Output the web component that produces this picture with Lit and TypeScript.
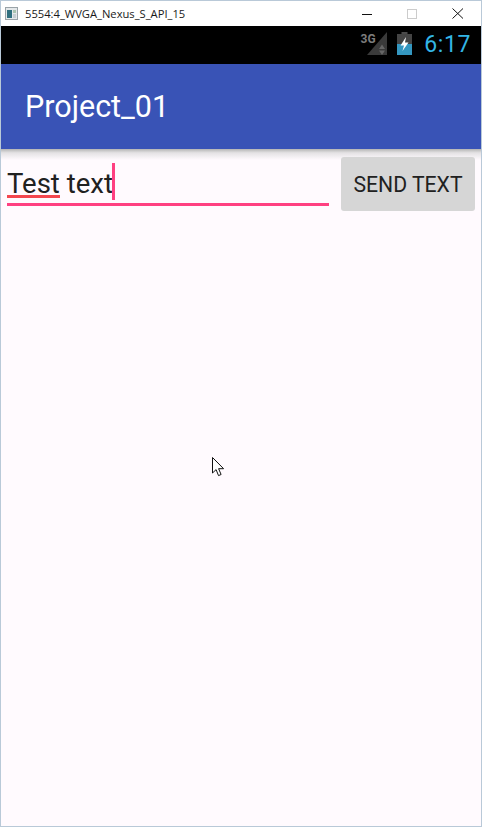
import { LitElement, css, html } from "lit";
import { customElement } from "lit/decorators.js";

// Emulator window: title bar, status bar, action bar, text field with send button.
@customElement("app-root")
export class AppRoot extends LitElement {
  static styles = css`
    :host {
      display: flex;
      flex-direction: column;
      position: relative;
      box-sizing: border-box;
      width: 482px;
      height: 827px;
      border: 1px solid #b9c9d8;
      background: #fffafe;
      font-family: Roboto, "Liberation Sans", sans-serif;
      overflow: hidden;
    }
    .titlebar {
      flex: none;
      display: flex;
      align-items: center;
      height: 25px;
      background: #fff;
      color: #1a1a1a;
      font-family: "Open Sans", sans-serif;
      font-size: 11.2px;
    }
    .app-icon {
      flex: none;
      margin: 0 7px 0 4px;
    }
    .title {
      flex: 1;
    }
    .win-btn {
      flex: none;
      display: block;
    }
    .win-btns {
      display: flex;
      gap: 35px;
      margin-right: 17px;
      align-items: center;
    }
    .statusbar {
      flex: none;
      display: flex;
      align-items: center;
      justify-content: flex-end;
      height: 38px;
      background: #000;
      padding-right: 10px;
    }
    .signal {
      display: block;
      margin: 0 9px 3px 0;
    }
    .battery {
      display: block;
      margin: 0 12px 3px 0;
    }
    .clock {
      color: #33b5e5;
      font-size: 23px;
      letter-spacing: 0.6px;
      line-height: 38px;
    }
    .actionbar {
      flex: none;
      display: flex;
      align-items: center;
      height: 85px;
      padding-left: 24px;
      background: #3953b6;
      color: #fff;
      font-size: 30.5px;
    }
    .shadow {
      flex: none;
      height: 11px;
      margin-bottom: -11px;
      background: linear-gradient(#b4b4b4, #e4e2e4 35%, #fffafe);
    }
    .row {
      display: flex;
      align-items: flex-start;
      padding: 8px 6px 0;
      gap: 12px;
    }
    .field {
      flex: none;
      box-sizing: content-box;
      width: 322px;
      height: 38px;
      padding-top: 8px;
      border-bottom: 3px solid #ff4081;
      font-size: 27.5px;
      color: #212121;
      line-height: 38px;
      white-space: nowrap;
    }
    .field-line {
      display: flex;
      align-items: flex-start;
      height: 38px;
    }
    .word {
      height: 30px;
      border-bottom: 3px solid #f4474f;
    }
    .rest {
      white-space: pre;
    }
    .caret {
      flex: none;
      width: 3px;
      height: 37px;
      margin-left: -1px;
      margin-top: -2px;
      background: #ff4081;
    }
    .send {
      flex: none;
      width: 134px;
      height: 54px;
      padding: 0;
      border: none;
      border-radius: 3px;
      background: #d6d6d6;
      color: #212121;
      font-family: inherit;
      font-size: 21.2px;
    }
    .pointer {
      position: absolute;
      left: 211px;
      top: 456px;
      display: block;
    }
  `;

  render() {
    return html`
      <div class="titlebar">
        <svg class="app-icon" width="13" height="13" viewBox="0 0 13 13">
          <rect x="0.5" y="0.5" width="12" height="12" fill="#e4e8ea" stroke="#9aa3a8" />
          <rect x="2" y="3" width="5" height="8" fill="#2f6f7f" />
          <rect x="8" y="3" width="3" height="3" fill="#a9c4b0" />
          <rect x="8" y="7" width="3" height="4" fill="#c6ced2" />
        </svg>
        <span class="title">5554:4_WVGA_Nexus_S_API_15</span>
        <div class="win-btns">
          <svg class="win-btn" width="10" height="10" viewBox="0 0 10 10">
            <path d="M0 5.5h10" stroke="#111" fill="none" />
          </svg>
          <svg class="win-btn" width="10" height="10" viewBox="0 0 10 10">
            <rect x="0.5" y="0.5" width="9" height="9" fill="none" stroke="#ccc" />
          </svg>
          <svg class="win-btn" width="12" height="11" viewBox="0 0 12 11">
            <path d="M0.5 0.5l10.5 10M11 0.5l-10.5 10" stroke="#111" fill="none" />
          </svg>
        </div>
      </div>
      <div class="statusbar">
        <svg class="signal" width="28" height="23" viewBox="0 0 28 23">
          <path d="M7 23L27 0v23z" fill="#3a3a3a" />
          <path d="M22 12.5l3 4.5h-6zM22 23l3-4.5h-6z" fill="#666" />
          <text x="0.5" y="11" font-family="Roboto" font-weight="700" font-size="12" fill="#7c7c7c">3G</text>
        </svg>
        <svg class="battery" width="15" height="23" viewBox="0 0 15 23">
          <rect x="4.5" y="0" width="6" height="2" fill="#4a4a4a" />
          <rect x="0" y="2" width="15" height="21" fill="#444" />
          <rect x="0" y="12" width="15" height="11" fill="#3497c0" />
          <path d="M9 5L3.5 13.5H7L5.5 19l6-8.5H8z" fill="#fff" />
        </svg>
        <span class="clock">6:17</span>
      </div>
      <div class="actionbar">Project_01</div>
      <div class="shadow"></div>
      <div class="row">
        <div class="field">
          <div class="field-line">
            <span class="word">Test</span><span class="rest"> text</span><span class="caret"></span>
          </div>
        </div>
        <button class="send">SEND TEXT</button>
      </div>
      <svg class="pointer" width="13" height="20" viewBox="0 0 13 20">
        <path
          d="M0.5 0.5v15.5l3.6-3.4 2.4 6 2.6-1.1-2.5-5.8h5z"
          fill="#fff"
          stroke="#111"
          stroke-width="1"
        />
      </svg>
    `;
  }
}
